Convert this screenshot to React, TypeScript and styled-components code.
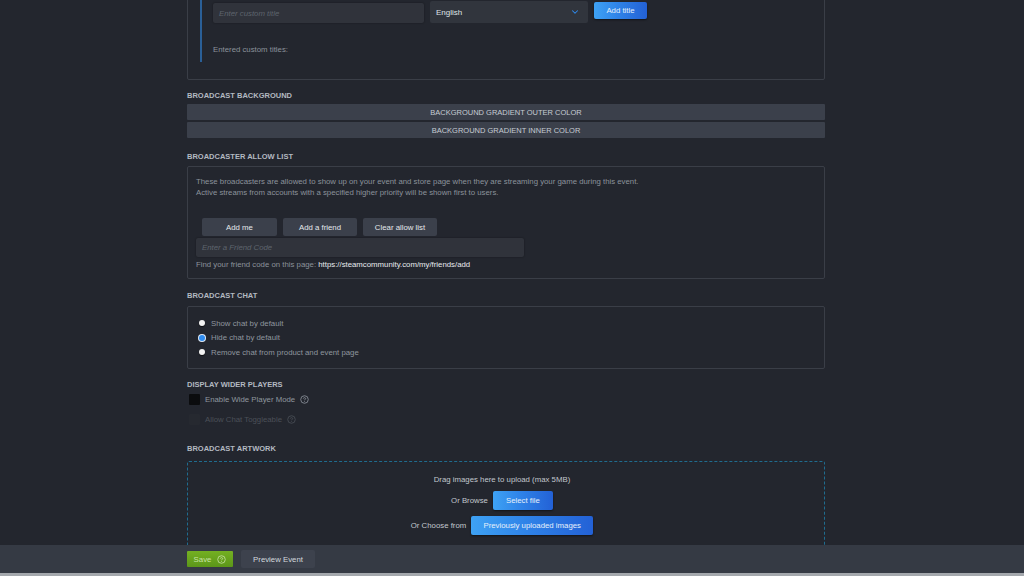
import React from "react";
import styled, { createGlobalStyle } from "styled-components";
import { ChevronDown } from "lucide-react";

const GlobalStyle = createGlobalStyle`
  html, body {
    margin: 0;
    padding: 0;
    background: #23262e;
    overflow: hidden;
  }
  body {
    font-family: "Liberation Sans", Arial, sans-serif;
    color: #8f98a0;
  }
`;

const Page = styled.div`
  width: 1024px;
  height: 576px;
  overflow: hidden;
  position: relative;
`;

const Column = styled.div`
  width: 638px;
  margin-left: 187px;
  margin-top: -21px;
  display: flex;
  flex-direction: column;
`;

const Box = styled.div<{ $pt?: number; $pb?: number; $pl?: number; $h?: number }>`
  border: 1px solid #3a3e47;
  border-radius: 2px;
  padding: ${(p) => p.$pt ?? 0}px 10px ${(p) => p.$pb ?? 0}px ${(p) => p.$pl ?? 8}px;
  ${(p) => (p.$h ? `height: ${p.$h}px;` : "")}
  box-sizing: border-box;
  display: flex;
  flex-direction: column;
`;

const Indent = styled.div`
  border-left: 2px solid #2a5f97;
  padding: 21px 0 7px 11px;
  margin-left: 4px;
  display: flex;
  flex-direction: column;
`;

const TitleRow = styled.div`
  display: flex;
  align-items: flex-start;
  gap: 6px;
  height: 22px;
`;

const TextInput = styled.div<{ $w: number; $h: number; $mt?: number }>`
  width: ${(p) => p.$w}px;
  height: ${(p) => p.$h}px;
  margin-top: ${(p) => p.$mt ?? 0}px;
  background: #30333b;
  border-radius: 2px;
  box-shadow: 0 0 2px rgba(0, 0, 0, 0.4);
  display: flex;
  align-items: center;
  padding-left: 6px;
  box-sizing: border-box;
  font-size: 7.8px;
  font-style: italic;
  color: #5e646d;
`;

const Select = styled.div`
  width: 158px;
  height: 22px;
  background: #31353d;
  border-radius: 2px;
  display: flex;
  align-items: center;
  justify-content: space-between;
  padding: 0 8px 0 6px;
  box-sizing: border-box;
  font-size: 8px;
  color: #dfe3e6;
`;

const BlueButton = styled.div<{ $w: number; $h: number; $mt?: number }>`
  width: ${(p) => p.$w}px;
  height: ${(p) => p.$h}px;
  margin-top: ${(p) => p.$mt ?? 0}px;
  background: linear-gradient(90deg, #3ea2f4 0%, #2f83e8 45%, #2361d6 100%);
  border-radius: 2px;
  box-shadow: 0 1px 2px rgba(0, 0, 0, 0.5);
  color: #e6f0fb;
  font-size: 7.8px;
  display: flex;
  align-items: center;
  justify-content: center;
`;

const Note = styled.div<{ $mt?: number; $lh?: number }>`
  font-size: 7.8px;
  line-height: ${(p) => p.$lh ?? 10}px;
  margin-top: ${(p) => p.$mt ?? 0}px;
  color: #8b929b;
`;

const Link = styled.span`
  color: #e8ebee;
`;

const Heading = styled.div<{ $mt: number; $mb: number }>`
  margin-top: ${(p) => p.$mt}px;
  margin-bottom: ${(p) => p.$mb}px;
  font-size: 7.5px;
  line-height: 9px;
  font-weight: bold;
  text-transform: uppercase;
  color: #b3b9c1;
`;

const Bars = styled.div`
  display: flex;
  flex-direction: column;
  gap: 2px;
`;

const Bar = styled.div`
  height: 16px;
  background: #3b404b;
  border-radius: 1px;
  display: flex;
  align-items: center;
  justify-content: center;
  font-size: 7.5px;
  color: #c6ccd3;
`;

const ButtonRow = styled.div`
  display: flex;
  gap: 6px;
  margin: 20px 0 0 6px;
`;

const GreyButton = styled.div<{ $w: number }>`
  width: ${(p) => p.$w}px;
  height: 18px;
  background: #3b404b;
  border-radius: 2px;
  display: flex;
  align-items: center;
  justify-content: center;
  font-size: 7.8px;
  color: #e4e8ec;
`;

const RadioList = styled.div`
  display: flex;
  flex-direction: column;
  gap: 4.5px;
  padding: 11px 0 0 3px;
`;

const RadioRow = styled.div`
  display: flex;
  align-items: center;
  gap: 6px;
  height: 10px;
  font-size: 7.8px;
  color: #8f969f;
`;

const Radio = styled.div<{ $on?: boolean }>`
  width: 6px;
  height: 6px;
  border-radius: 50%;
  background: ${(p) => (p.$on ? "#2f8cf0" : "#f2f2f2")};
  box-shadow: ${(p) => (p.$on ? "0 0 0 1px #dfe9f5" : "0 1px 1px rgba(0,0,0,0.6)")};
`;

const CheckList = styled.div`
  display: flex;
  flex-direction: column;
  gap: 9px;
  padding-left: 2px;
`;

const CheckRow = styled.div<{ $dim?: boolean }>`
  display: flex;
  align-items: center;
  gap: 5px;
  height: 11px;
  font-size: 7.8px;
  color: ${(p) => (p.$dim ? "#4b5058" : "#8f969f")};
`;

const CheckBox = styled.div<{ $dim?: boolean }>`
  width: 11px;
  height: 11px;
  border-radius: 1px;
  background: ${(p) => (p.$dim ? "#262930" : "#0b0c0e")};
`;

const DropZone = styled.div`
  height: 120px;
  border: 1px dashed #1f6c8f;
  border-radius: 2px;
  display: flex;
  flex-direction: column;
  align-items: center;
  padding: 13px 8px 0 0;
  box-sizing: border-box;
`;

const DropLine = styled.div<{ $mt?: number }>`
  display: flex;
  align-items: center;
  gap: 5px;
  margin-top: ${(p) => p.$mt ?? 0}px;
  font-size: 7.8px;
  color: #c2c7cd;
`;

const Footer = styled.div`
  position: absolute;
  left: 0;
  right: 0;
  bottom: 0;
  height: 28px;
  background: #353a44;
  border-bottom: 3px solid #a4a8ad;
  display: flex;
  align-items: center;
  gap: 8px;
  padding-left: 187px;
`;

const SaveButton = styled.div`
  width: 46px;
  height: 16px;
  background: linear-gradient(180deg, #74b022 0%, #5c9619 100%);
  border-radius: 1px;
  display: flex;
  align-items: center;
  justify-content: center;
  gap: 6px;
  font-size: 7.8px;
  color: #c8e3a6;
`;

const PreviewButton = styled.div`
  width: 74px;
  height: 18px;
  background: #3d424d;
  border-radius: 2px;
  display: flex;
  align-items: center;
  justify-content: center;
  font-size: 7.8px;
  color: #d3d8dd;
`;

function HelpIcon({ color }: { color: string }) {
  return (
    <svg width="9" height="9" viewBox="0 0 10 10">
      <circle cx="5" cy="5" r="4.2" fill="none" stroke={color} strokeWidth="0.9" />
      <path d="M3.7 4 C3.7 2.6 6.3 2.6 6.3 4 C6.3 4.9 5 4.9 5 5.9" fill="none" stroke={color} strokeWidth="0.9" />
      <circle cx="5" cy="7.3" r="0.55" fill={color} />
    </svg>
  );
}

export default function App() {
  return (
    <Page>
      <GlobalStyle />
      <Column>
        <Box $pb={17} $pl={8}>
          <Indent>
            <TitleRow>
              <TextInput $w={211} $h={20} $mt={2}>Enter custom title</TextInput>
              <Select>
                English
                <ChevronDown size={10} color="#2f8cf0" strokeWidth={2.5} />
              </Select>
              <BlueButton $w={53} $h={17} $mt={1}>Add title</BlueButton>
            </TitleRow>
            <Note $mt={22}>Entered custom titles:</Note>
          </Indent>
        </Box>

        <Heading $mt={11} $mb={4}>Broadcast Background</Heading>
        <Bars>
          <Bar>BACKGROUND GRADIENT OUTER COLOR</Bar>
          <Bar>BACKGROUND GRADIENT INNER COLOR</Bar>
        </Bars>

        <Heading $mt={14} $mb={5}>Broadcaster Allow List</Heading>
        <Box $pt={9} $h={113}>
          <Note $lh={11}>
            These broadcasters are allowed to show up on your event and store page when they are streaming your game during this event.
            <br />
            Active streams from accounts with a specified higher priority will be shown first to users.
          </Note>
          <ButtonRow>
            <GreyButton $w={75}>Add me</GreyButton>
            <GreyButton $w={74}>Add a friend</GreyButton>
            <GreyButton $w={74}>Clear allow list</GreyButton>
          </ButtonRow>
          <TextInput $w={328} $h={19} $mt={2}>Enter a Friend Code</TextInput>
          <Note $mt={3}>
            Find your friend code on this page: <Link>https://steamcommunity.com/my/friends/add</Link>
          </Note>
        </Box>

        <Heading $mt={12} $mb={6}>Broadcast Chat</Heading>
        <Box $h={63}>
          <RadioList>
            <RadioRow>
              <Radio />
              Show chat by default
            </RadioRow>
            <RadioRow>
              <Radio $on />
              Hide chat by default
            </RadioRow>
            <RadioRow>
              <Radio />
              Remove chat from product and event page
            </RadioRow>
          </RadioList>
        </Box>

        <Heading $mt={11} $mb={5}>Display Wider Players</Heading>
        <CheckList>
          <CheckRow>
            <CheckBox />
            Enable Wide Player Mode
            <HelpIcon color="#8f969f" />
          </CheckRow>
          <CheckRow $dim>
            <CheckBox $dim />
            Allow Chat Toggleable
            <HelpIcon color="#4b5058" />
          </CheckRow>
        </CheckList>

        <Heading $mt={19} $mb={8}>Broadcast Artwork</Heading>
        <DropZone>
          <DropLine>Drag images here to upload (max 5MB)</DropLine>
          <DropLine $mt={7}>
            Or Browse
            <BlueButton $w={60} $h={19}>Select file</BlueButton>
          </DropLine>
          <DropLine $mt={6}>
            Or Choose from
            <BlueButton $w={122} $h={19}>Previously uploaded images</BlueButton>
          </DropLine>
        </DropZone>
      </Column>

      <Footer>
        <SaveButton>
          Save
          <HelpIcon color="#c8e3a6" />
        </SaveButton>
        <PreviewButton>Preview Event</PreviewButton>
      </Footer>
    </Page>
  );
}
